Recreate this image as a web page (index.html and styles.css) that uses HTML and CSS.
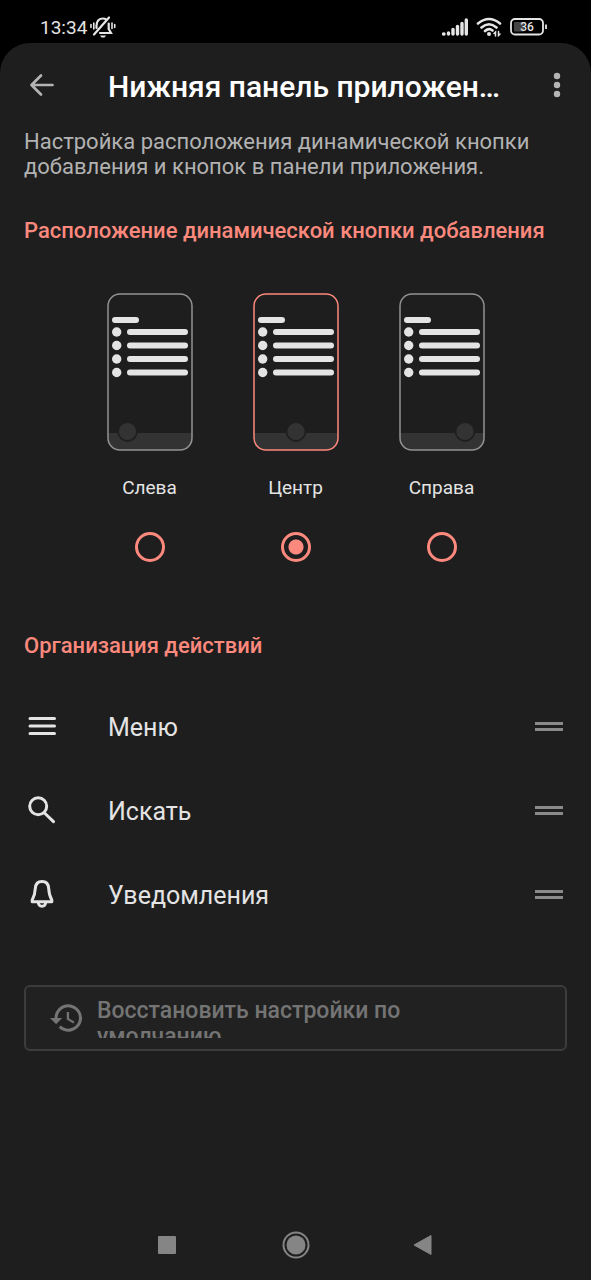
FILE: index.html
```html
<!DOCTYPE html>
<html lang="ru">
<head>
<meta charset="utf-8">
<meta name="viewport" content="width=device-width, initial-scale=1">
<title>Нижняя панель приложения</title>
<link rel="stylesheet" href="styles.css">
</head>
<body>
<svg class="defs" aria-hidden="true">
  <symbol id="preview" viewBox="0 0 86 158">
    <path d="M1 140H85V146Q85 157 74 157H12Q1 157 1 146Z" fill="#333"/>
    <rect x="1" y="1" width="84" height="156" rx="12" fill="none" stroke="currentColor" stroke-width="1.5"/>
    <g fill="#e4e4e4">
      <rect x="5" y="24" width="27" height="6" rx="3"/>
      <circle cx="9.7" cy="39" r="4.7"/><rect x="20" y="36" width="61" height="6" rx="3"/>
      <circle cx="9.7" cy="52.5" r="4.7"/><rect x="20" y="49.5" width="61" height="6" rx="3"/>
      <circle cx="9.7" cy="66" r="4.7"/><rect x="20" y="63" width="61" height="6" rx="3"/>
      <circle cx="9.7" cy="79.5" r="4.7"/><rect x="20" y="76.5" width="61" height="6" rx="3"/>
    </g>
  </symbol>
  <symbol id="grip" viewBox="0 0 28 10"><path d="M0 1.5H28M0 7.500H28" stroke="#8a8a8a" stroke-width="3"/></symbol>
</svg>
<div class="screen">
  <header class="status">
    <div class="status-side">
      <time class="clock">13:34</time>
      <svg width="26" height="22" viewBox="0 0 26 22" fill="none" stroke="#e6e6e6" stroke-width="2.200" stroke-linecap="round">
        <path d="M6.500 12V9.500Q7 2.500 13 2.500Q14.800 2.500 16 3.300M18.700 7.500V13L21 17H10M4 18.500L19 1.500"/>
        <path d="M10 19.500H16L14.500 21.500H11.500Z" fill="#e6e6e6" stroke="none"/>
        <path d="M1 8.500V11.500M3.800 7V13M22 7V12.500M24.700 8.500V11.500" stroke-width="1.600"/>
      </svg>
    </div>
    <div class="status-side">
      <svg width="27" height="18" viewBox="0 0 27 18" stroke="#e6e6e6" stroke-width="3.400" stroke-linecap="round"><path d="M2.500 16H3M7.500 15V16M12 11.500V16M16.500 8.500V16M21 5.500V16M25.300 2V16"/></svg>
      <svg width="26" height="20" viewBox="0 0 26 20" fill="none" stroke="#e6e6e6" stroke-width="2.600" stroke-linecap="round">
        <path d="M2 6.500Q13 -2.500 24 6.500M5.500 10.500Q13 4 20.500 10.500M9 14Q13 10.500 16.500 13.500"/>
        <circle cx="13" cy="17" r="2" fill="#e6e6e6" stroke="none"/>
        <path d="M19.500 19V15L18 16.500M22.500 14.500V18.500L24 17" stroke-width="1.500"/>
      </svg>
      <svg width="38" height="18" viewBox="0 0 38 18">
        <rect x="1" y="1" width="32" height="15.500" rx="4" fill="none" stroke="#e6e6e6" stroke-width="1.800"/>
        <rect x="4" y="4" width="10" height="9.500" rx="1" fill="#454545"/>
        <path d="M36 6.500V11" stroke="#e6e6e6" stroke-width="1.800"/>
        <text class="battery" x="17" y="13" text-anchor="middle">36</text>
      </svg>
    </div>
  </header>

  <div class="app">
    <div class="toolbar">
      <button class="icon-btn" aria-label="Назад">
        <svg width="26" height="24" viewBox="0 0 26 24" fill="none" stroke="#b4b4b4" stroke-width="2.700" stroke-linecap="round" stroke-linejoin="round"><path d="M23.500 12H3M12 2.500L2.500 12L12 21.500"/></svg>
      </button>
      <h1 class="title">Нижняя панель приложения</h1>
      <button class="icon-btn" aria-label="Ещё">
        <svg width="8" height="26" viewBox="0 0 8 26" fill="#b4b4b4"><circle cx="4" cy="4" r="3.200"/><circle cx="4" cy="13" r="3.200"/><circle cx="4" cy="22" r="3.200"/></svg>
      </button>
    </div>

    <main class="content">
      <p class="intro">Настройка расположения динамической кнопки добавления и кнопок в панели приложения.</p>

      <h2 class="section">Расположение динамической кнопки добавления</h2>
      <div class="options" role="radiogroup">
        <label class="option">
          <svg class="phone" viewBox="0 0 86 158"><use href="#preview"/><circle cx="20.500" cy="138.500" r="9.500" fill="#333" stroke="#1f1f1f" stroke-width="1.800"/></svg>
          <span>Слева</span>
          <input class="radio" type="radio" name="position">
        </label>
        <label class="option">
          <svg class="phone phone-on" viewBox="0 0 86 158"><use href="#preview"/><circle cx="43" cy="138.500" r="9.500" fill="#333" stroke="#1f1f1f" stroke-width="1.800"/></svg>
          <span>Центр</span>
          <input class="radio" type="radio" name="position" checked>
        </label>
        <label class="option">
          <svg class="phone" viewBox="0 0 86 158"><use href="#preview"/><circle cx="66" cy="138.500" r="9.500" fill="#333" stroke="#1f1f1f" stroke-width="1.800"/></svg>
          <span>Справа</span>
          <input class="radio" type="radio" name="position">
        </label>
      </div>

      <h2 class="section">Организация действий</h2>
      <ul class="actions">
        <li class="action">
          <svg class="action-icon" viewBox="0 0 36 36" fill="none" stroke="#e4e4e4" stroke-width="3" stroke-linecap="round"><path d="M6 9.500H30.500M6 17H30.500M6 24.500H30.500"/></svg>
          <span class="action-name">Меню</span>
          <button class="grip" aria-label="Переместить: Меню"><svg width="28" height="10"><use href="#grip"/></svg></button>
        </li>
        <li class="action">
          <svg class="action-icon" viewBox="0 0 36 36" fill="none" stroke="#e4e4e4" stroke-width="3" stroke-linecap="round"><circle cx="14.200" cy="13.300" r="8.500"/><path d="M20.500 20L29.500 28.700"/></svg>
          <span class="action-name">Искать</span>
          <button class="grip" aria-label="Переместить: Искать"><svg width="28" height="10"><use href="#grip"/></svg></button>
        </li>
        <li class="action">
          <svg class="action-icon" viewBox="0 0 36 36" fill="none" stroke="#e4e4e4" stroke-width="3" stroke-linecap="round" stroke-linejoin="round"><path d="M18 4.500C13.500 4.500 11.500 7.500 11.300 11.500C11 17 10 20 8.200 23V24.700H27.800V23C26 20 25 17 24.700 11.500C24.500 7.500 22.500 4.500 18 4.500ZM14.200 25Q14.500 29.300 18 29.300Q21.500 29.300 21.800 25"/></svg>
          <span class="action-name">Уведомления</span>
          <button class="grip" aria-label="Переместить: Уведомления"><svg width="28" height="10"><use href="#grip"/></svg></button>
        </li>
      </ul>

      <button class="reset" disabled>
        <svg class="reset-icon" viewBox="1 3 21 18" fill="#747474"><path d="M13 3a9 9 0 0 0-9 9H1l3.890 3.890.07.14L9 12H6a7 7 0 1 1 2.060 4.940l-1.420 1.420A9 9 0 1 0 13 3zm-1 5v5l4.280 2.540.72-1.210-3.500-2.080V8H12z"/></svg>
        <span class="reset-text">Восстановить настройки по умолчанию</span>
      </button>
    </main>

    <nav class="system-nav">
      <button class="nav-btn" aria-label="Недавние"><svg width="28" height="28" viewBox="0 0 28 28"><rect x="4" y="5" width="18" height="18" rx="1" fill="#858585"/></svg></button>
      <button class="nav-btn" aria-label="Домой"><svg width="28" height="28" viewBox="0 0 28 28"><circle cx="14" cy="14" r="12.500" fill="none" stroke="#858585" stroke-width="2"/><circle cx="14" cy="14" r="9.500" fill="#858585"/></svg></button>
      <button class="nav-btn" aria-label="Назад"><svg width="28" height="28" viewBox="0 0 28 28"><path d="M4 14L21 4.500V23.500Z" fill="#858585" stroke="#858585" stroke-linejoin="round"/></svg></button>
    </nav>
  </div>
</div>
</body>
</html>
```
FILE: styles.css
```css
* { box-sizing: border-box; }
body {
  margin: 0;
  background: #000;
  color: #e4e4e4;
  font-family: Roboto, "Noto Sans", sans-serif;
}
button {
  padding: 0;
  border: 0;
  background: none;
  color: inherit;
  font: inherit;
}
svg { display: block; flex: none; }
.defs { position: absolute; width: 0; height: 0; }
.screen {
  display: flex;
  flex-direction: column;
  min-height: 100vh;
}
.status {
  display: flex;
  justify-content: space-between;
  height: 43px;
  padding: 10px 43px 0 40px;
}
.status-side {
  display: flex;
  align-items: center;
  gap: 8px;
  height: 34px;
}
.status-side:first-child { gap: 3px; }
.clock { font-size: 19px; }
.battery { fill: #e6e6e6; font-size: 12px; font-weight: 500; }
.app {
  display: flex;
  flex: 1;
  flex-direction: column;
  border-radius: 30px 30px 0 0;
  background: #1e1e1e;
}
.toolbar {
  display: flex;
  align-items: center;
  height: 84px;
  padding: 0 16px 0 24px;
}
.icon-btn {
  display: flex;
  align-items: center;
  justify-content: center;
  flex: none;
  width: 36px;
  height: 48px;
}
.title {
  flex: 1;
  min-width: 0;
  margin: 4px 32px 0 48px;
  overflow: hidden;
  color: #fff;
  font-size: 30px;
  font-weight: 500;
  line-height: 40px;
  text-overflow: ellipsis;
  white-space: nowrap;
}
.content {
  display: flex;
  flex-direction: column;
  padding: 2px 24px 0;
}
.intro {
  margin: 0 0 38px;
  color: #b2b2b2;
  font-size: 22px;
  line-height: 25px;
}
.section {
  margin: 0;
  color: #fc897d;
  font-size: 22px;
  font-weight: 500;
  line-height: 28px;
}
.options {
  display: grid;
  grid-template-columns: repeat(3, 146px);
  justify-content: center;
  padding: 48px 0 70px;
}
.option {
  display: flex;
  flex-direction: column;
  align-items: center;
  font-size: 19px;
  line-height: 24px;
}
.phone { width: 86px; height: 158px; margin-bottom: 25px; color: #939393; }
.phone-on { color: #fc897d; }
.radio {
  appearance: none;
  width: 30px;
  height: 30px;
  margin: 32px 0 0;
  border: 3px solid #fc897d;
  border-radius: 50%;
}
.radio:checked { background: radial-gradient(circle, #fc897d 7px, transparent 8px); }
.actions {
  margin: 25px 0 48px;
  padding: 0;
  list-style: none;
}
.action { display: flex; align-items: center; height: 84px; }
.action-icon { width: 36px; height: 36px; }
.action-name {
  flex: 1;
  padding: 2px 0 0 48px;
  font-size: 25px;
  line-height: 32px;
}
.grip { margin: 0 4px; }
.reset {
  display: flex;
  align-items: center;
  height: 66px;
  padding: 0 24px;
  border: 2px solid #3c3c3c;
  border-radius: 6px;
  background: #212121;
  color: #747474;
}
.reset-icon { width: 32px; height: 28px; margin-right: 15px; }
.reset-text {
  max-width: 350px;
  height: 40px;
  overflow: hidden;
  font-size: 23px;
  font-weight: 500;
  line-height: 26px;
  text-align: left;
}
.system-nav {
  display: grid;
  grid-template-columns: repeat(3, 128px);
  justify-content: center;
  margin-top: auto;
  padding-bottom: 21px;
}
.nav-btn { display: flex; justify-content: center; }
```
